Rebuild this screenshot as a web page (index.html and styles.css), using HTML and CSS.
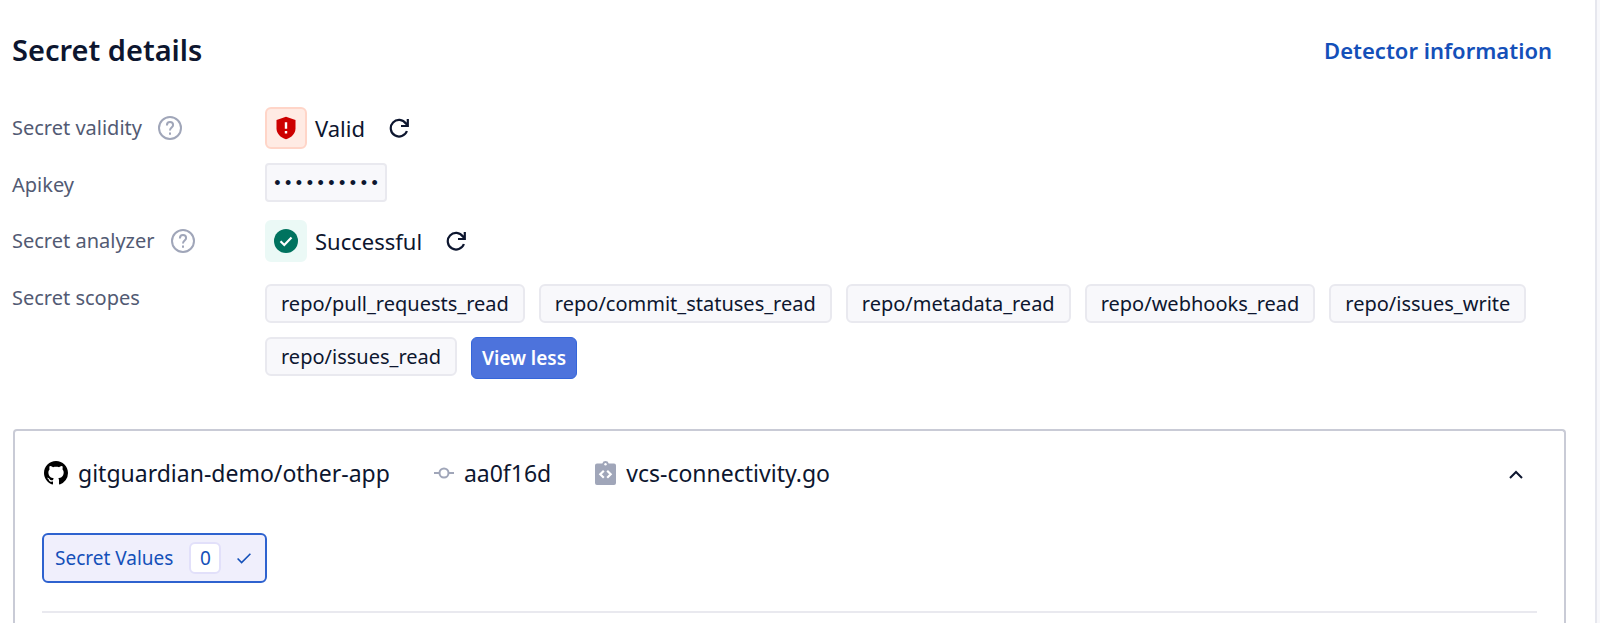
FILE: index.html
```html
<!DOCTYPE html>
<html lang="en">
<head>
    <meta charset="UTF-8">
    <meta name="viewport" content="width=device-width, initial-scale=1">
    <title>Secret details</title>
    <link rel="stylesheet" href="styles.css">
</head>
<body>
    <main class="panel">
        <header class="panel-header">
            <h1>Secret details</h1>
            <a href="#detector" class="detector-link">Detector information</a>
        </header>

        <!-- Secret properties -->
        <dl class="details">
            <dt>
                Secret validity
                <button type="button" class="icon-button" aria-label="About secret validity">
                    <svg class="help-icon" viewBox="0 0 24 24" fill="none" stroke="currentColor" stroke-width="2"><circle cx="12" cy="12" r="11"/><path d="M8.9 9.4C8.9 7.4 10.2 6.1 12 6.1s3.1 1.2 3.1 2.9c0 2.5-3.1 2.6-3.1 5.4"/><path d="M12 16.5v2.2"/></svg>
                </button>
            </dt>
            <dd class="status">
                <span class="status-badge invalid">
                    <svg class="status-icon" viewBox="0 0 24 24"><path fill="#cd0000" d="M12 .8 21.5 4v8.2c0 5.2-3.8 9.3-9.5 11-5.7-1.7-9.5-5.8-9.5-11V4z"/><path stroke="#fff" stroke-width="2.4" d="M12 6.2v6.6M12 15v2.5"/></svg>
                </span>
                <span>Valid</span>
                <button type="button" class="icon-button refresh" aria-label="Refresh validity">
                    <svg class="refresh-icon" viewBox="0 0 20 20" fill="none" stroke="currentColor" stroke-width="2.2"><path d="M17.9 13A8.3 8.3 0 1 1 16.9 5.5L18.5 7.3M18.8 1v7H12"/></svg>
                </button>
            </dd>

            <dt>Apikey</dt>
            <dd class="apikey">
                <span class="masked">••••••••••</span>
            </dd>

            <dt>
                Secret analyzer
                <button type="button" class="icon-button" aria-label="About secret analyzer">
                    <svg class="help-icon" viewBox="0 0 24 24" fill="none" stroke="currentColor" stroke-width="2"><circle cx="12" cy="12" r="11"/><path d="M8.9 9.4C8.9 7.4 10.2 6.1 12 6.1s3.1 1.2 3.1 2.9c0 2.5-3.1 2.6-3.1 5.4"/><path d="M12 16.5v2.2"/></svg>
                </button>
            </dt>
            <dd class="status">
                <span class="status-badge success">
                    <svg class="status-icon" viewBox="0 0 24 24"><circle cx="12" cy="12" r="12" fill="#00735f"/><path d="m6.5 12.2 3.8 3.8 7.2-7.4" fill="none" stroke="#fff" stroke-width="2.2"/></svg>
                </span>
                <span>Successful</span>
                <button type="button" class="icon-button refresh" aria-label="Refresh analyzer">
                    <svg class="refresh-icon" viewBox="0 0 20 20" fill="none" stroke="currentColor" stroke-width="2.2"><path d="M17.9 13A8.3 8.3 0 1 1 16.9 5.5L18.5 7.3M18.8 1v7H12"/></svg>
                </button>
            </dd>

            <dt class="scopes-label">Secret scopes</dt>
            <dd class="scopes">
                <span class="tag">repo/pull_requests_read</span>
                <span class="tag">repo/commit_statuses_read</span>
                <span class="tag">repo/metadata_read</span>
                <span class="tag">repo/webhooks_read</span>
                <span class="tag">repo/issues_write</span>
                <span class="tag">repo/issues_read</span>
                <button type="button" class="view-less">View less</button>
            </dd>
        </dl>

        <!-- Occurrence -->
        <section class="occurrence">
            <div class="occurrence-header">
                <span class="source">
                    <svg class="github-icon" viewBox="0 0 16 16"><path d="M8 0C3.58 0 0 3.58 0 8c0 3.54 2.29 6.53 5.47 7.59.4.07.55-.17.55-.38 0-.19-.01-.82-.01-1.49-2.01.37-2.53-.49-2.69-.94-.09-.23-.48-.94-.82-1.13-.28-.15-.68-.52-.01-.53.63-.01 1.08.58 1.23.82.72 1.21 1.87.87 2.33.66.07-.52.28-.87.51-1.07-1.78-.2-3.64-.89-3.64-3.95 0-.87.31-1.59.82-2.15-.08-.2-.36-1.02.08-2.12 0 0 .67-.21 2.2.82.64-.18 1.32-.27 2-.27s1.36.09 2 .27c1.53-1.04 2.2-.82 2.2-.82.44 1.1.16 1.92.08 2.12.51.56.82 1.27.82 2.15 0 3.07-1.87 3.75-3.65 3.95.29.25.54.73.54 1.48 0 1.07-.01 1.93-.01 2.2 0 .21.15.46.55.38A8.01 8.01 0 0 0 16 8c0-4.42-3.58-8-8-8z"/></svg>
                    gitguardian-demo/other-app
                </span>
                <span class="source">
                    <svg class="commit-icon" viewBox="0 0 20 20" fill="none" stroke="currentColor" stroke-width="2"><circle cx="10" cy="10" r="4.5"/><path d="M0 10h5.5M14.5 10H20"/></svg>
                    aa0f16d
                </span>
                <span class="source">
                    <svg class="file-icon" viewBox="0 0 21 24"><path fill="currentColor" d="M2 2.5h5.3a3.3 3.3 0 0 1 6.4 0H19a2 2 0 0 1 2 2V22a2 2 0 0 1-2 2H2a2 2 0 0 1-2-2V4.5a2 2 0 0 1 2-2z"/><circle cx="10.5" cy="3.2" r="1.2" fill="#fff"/><path d="M8.8 9.8 5.3 13.3l3.5 3.5M12.2 9.8l3.5 3.5-3.5 3.5" fill="none" stroke="#fff" stroke-width="2.2"/></svg>
                    vcs-connectivity.go
                </span>
                <button type="button" class="icon-button toggle" aria-label="Collapse occurrence" aria-expanded="true">
                    <svg class="chevron-icon" viewBox="0 0 14 14" fill="none" stroke="currentColor" stroke-width="2"><path d="m1 12 6-6 6 6"/></svg>
                </button>
            </div>
            <div class="filters">
                <button type="button" class="filter" aria-pressed="true">
                    Secret Values
                    <span class="count">0</span>
                    <svg class="check-icon" viewBox="0 0 14 14" fill="none" stroke="currentColor" stroke-width="1.6"><path d="m.6 7.5 4 4L13.4 2.7"/></svg>
                </button>
            </div>
        </section>
    </main>
</body>
</html>
```

FILE: styles.css
```css
* {
    box-sizing: border-box;
}

body {
    margin: 0;
    font-family: "Noto Sans", sans-serif;
    font-size: 20px;
    line-height: 28px;
    color: #0d162f;
    background: #f8f8fb;
}

button {
    font: inherit;
    cursor: pointer;
}

svg {
    display: block;
    flex: none;
}

.panel {
    display: flex;
    flex-direction: column;
    min-height: 100vh;
    margin-right: 3px;
    padding: 30px 29px 0 12px;
    background: #fff;
    border-right: 2px solid #e6e7ee;
}

.panel-header {
    display: flex;
    align-items: center;
    justify-content: space-between;
    padding-right: 14px;
}

h1 {
    margin: 0;
    font-size: 29px;
    line-height: 40px;
    font-weight: 600;
}

.detector-link {
    font-size: 22px;
    font-weight: 600;
    color: #1450b9;
    text-decoration: none;
}

.details {
    display: grid;
    grid-template-columns: 253px 1fr;
    row-gap: 14px;
    align-items: center;
    margin: 37px 0 50px;
}

.details dt {
    display: flex;
    align-items: center;
    gap: 16px;
    color: #525a73;
}

.details dd {
    margin: 0;
}

.icon-button {
    padding: 0;
    color: inherit;
    background: none;
    border: none;
}

.help-icon {
    width: 24px;
    height: 24px;
    color: #a0a6b9;
}

.status {
    display: flex;
    align-items: center;
    gap: 8px;
    font-size: 22px;
}

.status-badge {
    display: flex;
    align-items: center;
    justify-content: center;
    width: 42px;
    height: 42px;
    border: 2px solid;
    border-radius: 6px;
}

.invalid {
    background: #ffebe4;
    border-color: #ffd5c8;
}

.success {
    background: #ebf9f6;
    border-color: #ebf9f6;
}

.status-icon {
    width: 24px;
    height: 24px;
}

.refresh {
    margin-left: 16px;
}

.refresh-icon {
    width: 20px;
    height: 20px;
}

.apikey {
    display: flex;
    padding-bottom: 4px;
}

.masked {
    padding: 4px 5px 0;
    font-family: "Liberation Mono", monospace;
    font-size: 18px;
    line-height: 31px;
    background: #f8f8fb;
    border: 2px solid #e9e9ef;
    border-radius: 4px;
}

.details .scopes-label {
    align-self: start;
    padding-top: 8px;
}

.scopes {
    display: flex;
    flex-wrap: wrap;
    align-items: flex-start;
    gap: 14px;
    padding-top: 8px;
}

.tag {
    padding: 4px 14px;
    line-height: 27px;
    background: #f8f8fb;
    border: 2px solid #e9e9ef;
    border-radius: 6px;
}

.view-less {
    padding: 6px 10px;
    font-size: 19px;
    font-weight: 600;
    color: #fff;
    background: #4d73dc;
    border: 1px solid #3465da;
    border-radius: 6px;
}

.occurrence {
    flex: 1;
    margin-left: 1px;
    padding: 26px 27px 0;
    border: 2px solid #c9cbd6;
    border-bottom: none;
    border-radius: 4px 4px 0 0;
}

.occurrence-header {
    display: flex;
    align-items: center;
    gap: 44px;
    padding: 0 14px 0 2px;
    font-size: 23px;
    line-height: 32px;
}

.source {
    display: flex;
    align-items: center;
    gap: 10px;
}

.github-icon {
    width: 24px;
    height: 24px;
}

.commit-icon {
    width: 20px;
    height: 20px;
    color: #a0a6b9;
}

.file-icon {
    width: 21px;
    height: 24px;
    color: #a0a6b9;
}

.toggle {
    margin-left: auto;
}

.chevron-icon,
.check-icon {
    width: 14px;
    height: 14px;
}

.filters {
    padding: 44px 0 28px;
    border-bottom: 2px solid #e9e9ef;
}

.filter {
    display: flex;
    align-items: center;
    gap: 16px;
    height: 50px;
    padding: 0 14px 0 11px;
    font-size: 19px;
    color: #1450b9;
    background: #f0effc;
    border: 2px solid #2e62cf;
    border-radius: 6px;
}

.count {
    width: 32px;
    line-height: 28px;
    text-align: center;
    background: #fff;
    border: 2px solid #e2e0fa;
    border-radius: 6px;
}
```
